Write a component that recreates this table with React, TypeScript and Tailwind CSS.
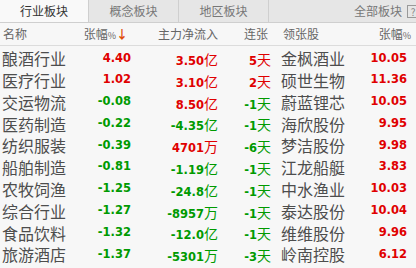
import React from "react";

type Row = {
  name: string;
  chg: string;
  flow: string;
  unit: string;
  days: string;
  stock: string;
  schg: string;
};

const rows: Row[] = [
  { name: "酿酒行业", chg: "4.40", flow: "3.50", unit: "亿", days: "5", stock: "金枫酒业", schg: "10.05" },
  { name: "医疗行业", chg: "1.02", flow: "3.10", unit: "亿", days: "2", stock: "硕世生物", schg: "11.36" },
  { name: "交运物流", chg: "-0.08", flow: "8.50", unit: "亿", days: "-1", stock: "蔚蓝锂芯", schg: "10.05" },
  { name: "医药制造", chg: "-0.22", flow: "-4.35", unit: "亿", days: "-1", stock: "海欣股份", schg: "9.95" },
  { name: "纺织服装", chg: "-0.39", flow: "4701", unit: "万", days: "-6", stock: "梦洁股份", schg: "9.98" },
  { name: "船舶制造", chg: "-0.81", flow: "-1.19", unit: "亿", days: "-1", stock: "江龙船艇", schg: "3.83" },
  { name: "农牧饲渔", chg: "-1.25", flow: "-24.8", unit: "亿", days: "-1", stock: "中水渔业", schg: "10.03" },
  { name: "综合行业", chg: "-1.27", flow: "-8957", unit: "万", days: "-1", stock: "泰达股份", schg: "10.04" },
  { name: "食品饮料", chg: "-1.32", flow: "-12.0", unit: "亿", days: "-1", stock: "维维股份", schg: "9.96" },
  { name: "旅游酒店", chg: "-1.37", flow: "-5301", unit: "万", days: "-3", stock: "岭南控股", schg: "6.12" },
];

const cjk = "font-['Noto_Sans_CJK_SC',sans-serif]";
const num = "font-['DejaVu_Sans',sans-serif] font-bold text-[11.5px]";

function color(v: string) {
  return v.startsWith("-") ? "text-[#009a00]" : "text-[#e00000]";
}

export default function App() {
  return (
    <div className={`w-[416px] h-[268px] overflow-hidden bg-[#f7f7f7] ${cjk}`}>
      {/* tab bar */}
      <div className="flex h-[23px] bg-[#e6e6e6] border-b border-[#cfcfcf] text-[12px] leading-[22px] text-[#555]">
        <div className="w-[89px] bg-[#f9f9f9] text-center text-[#333] border-r border-[#cfcfcf]">行业板块</div>
        <div className="w-[90px] text-center text-[#777] border-r border-[#cfcfcf]">概念板块</div>
        <div className="w-[90px] text-center text-[#777] border-r border-[#cfcfcf]">地区板块</div>
        <div className="flex-1 flex items-center justify-end gap-[5px] text-[#777]">
          <span>全部板块</span>
          <span className="w-[12px] h-[13px] border border-[#999] text-[10px] leading-[11px] text-[#888] text-center mr-[-3px]">?</span>
        </div>
      </div>
      {/* header */}
      <div className="grid grid-cols-[80px_48px_90px_50px_1fr_60px] h-[23px] items-center border-b border-[#dcdcdc] text-[12px] text-[#666]">
        <div className="pl-[3px]">名称</div>
        <div className="text-right whitespace-nowrap">
          张幅<span className="text-[9px]">%</span>
          <span className="text-[#e0500a] font-bold">↓</span>
        </div>
        <div className="text-right whitespace-nowrap">主力净流入</div>
        <div className="text-right">连张</div>
        <div className="pl-[15px]">领张股</div>
        <div className="text-right pr-[5px] whitespace-nowrap">
          张幅<span className="text-[9px]">%</span>
        </div>
      </div>
      {/* rows */}
      {rows.map((r) => (
        <div
          key={r.name}
          className="grid grid-cols-[80px_51px_87px_53px_1fr_60px] h-[21.8px] items-center"
        >
          <div className="pl-[2px] text-[16px] text-[#4d4d4d] leading-none">{r.name}</div>
          <div className={`text-right ${num} ${color(r.chg)}`}>{r.chg}</div>
          <div className={`text-right whitespace-nowrap ${color(r.flow)}`}>
            <span className={num}>{r.flow}</span>
            <span className="text-[14px]">{r.unit}</span>
          </div>
          <div className={`text-right whitespace-nowrap ${color(r.days)}`}>
            <span className={num}>{r.days}</span>
            <span className="text-[14px]">天</span>
          </div>
          <div className="pl-[10px] text-[16px] text-[#4d4d4d] leading-none">{r.stock}</div>
          <div className={`text-right pr-[9px] ${num} text-[#e00000]`}>{r.schg}</div>
        </div>
      ))}
    </div>
  );
}
